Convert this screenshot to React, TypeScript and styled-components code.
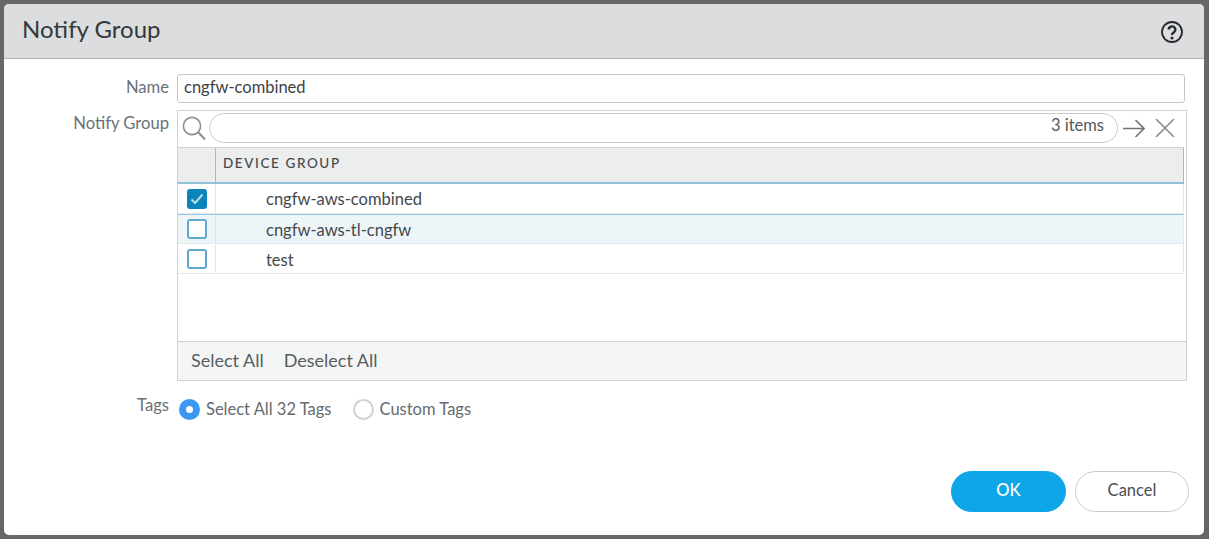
import React from 'react';
import styled, { createGlobalStyle } from 'styled-components';

const GlobalStyle = createGlobalStyle`
  html, body {
    margin: 0;
    padding: 0;
    height: 100%;
    background: #666767;
    font-family: Lato, "Open Sans", sans-serif;
  }
  * {
    box-sizing: border-box;
  }
`;

const Page = styled.div`
  width: 1209px;
  height: 539px;
  padding: 4px 5px 4px 4px;
`;

const Dialog = styled.div`
  height: 531px;
  background: #fff;
  border-radius: 5px;
  overflow: hidden;
  display: flex;
  flex-direction: column;
`;

const Header = styled.header`
  height: 55px;
  flex: none;
  background: #dcdddf;
  border-bottom: 1px solid #b0b2b4;
  display: flex;
  align-items: center;
  justify-content: space-between;
  padding: 0 21px 0 18px;
`;

const Title = styled.h1`
  margin: 0 0 5px;
  font-size: 24px;
  font-weight: 400;
  color: #33383c;
`;

const HelpIcon = styled.svg`
  margin-top: 1px;
`;

const Body = styled.div`
  flex: 1;
  display: flex;
  flex-direction: column;
  padding: 15px 15px 23px 0;
`;

const Row = styled.div<{ $mt?: number }>`
  display: grid;
  grid-template-columns: 165px 1fr;
  column-gap: 8px;
  margin-top: ${(p) => p.$mt ?? 0}px;
`;

const Label = styled.label<{ $offset: number }>`
  text-align: right;
  font-size: 16.6px;
  line-height: 20px;
  color: #6a7278;
  margin-top: ${(p) => p.$offset}px;
`;

const NameInput = styled.div`
  width: 1008px;
  height: 29px;
  border: 1px solid #c4c6c8;
  border-radius: 3px;
  padding: 0 6px;
  font-size: 16.5px;
  line-height: 24px;
  color: #3d4246;
`;

const Group = styled.div`
  width: 1010px;
  height: 271px;
  border: 1px solid #d0d2d3;
  display: flex;
  flex-direction: column;
`;

const Toolbar = styled.div`
  height: 36px;
  flex: none;
  display: flex;
  align-items: center;
  padding: 0 11px 2px 4px;
`;

const SearchPill = styled.div`
  width: 909px;
  height: 30px;
  margin-left: 3px;
  border: 1px solid #c8cacb;
  border-radius: 15px;
  text-align: right;
  padding-right: 13px;
  font-size: 16.5px;
  line-height: 23px;
  color: #55595c;
`;

const ToolIcon = styled.svg<{ $ml: number }>`
  margin-left: ${(p) => p.$ml}px;
  flex: none;
`;

const HeaderRow = styled.div`
  height: 37px;
  flex: none;
  width: 1006px;
  background: #eceeee;
  border-top: 1px solid #d0d2d3;
  border-bottom: 2px solid #8fc3dc;
  border-right: 1px solid #b4b6b7;
  display: flex;
`;

const HeaderCheckCell = styled.div`
  width: 38px;
  flex: none;
  border-right: 1px solid #b4b6b7;
`;

const HeaderCell = styled.div`
  padding-left: 7px;
  font-size: 13.5px;
  font-weight: 500;
  line-height: 31px;
  letter-spacing: 1.6px;
  color: #43494d;
`;

const Rows = styled.div`
  flex: 1;
`;

const TableRow = styled.div<{ $hover?: boolean }>`
  width: 1006px;
  height: 30px;
  display: flex;
  background: ${(p) => (p.$hover ? '#edf5f8' : '#fff')};
  border-bottom: 1px solid #e6e8e9;
  border-top: ${(p) => (p.$hover ? '1px solid #8fc8e2' : 'none')};
  border-right: 1px solid #e6e8e9;

  &:last-child {
    padding-top: 1px;
  }
`;

const CheckCell = styled.div`
  width: 38px;
  flex: none;
  border-right: 1px solid #e3e5e6;
  display: flex;
  align-items: center;
  justify-content: center;
`;

const Check = styled.div<{ $checked?: boolean }>`
  width: 20px;
  height: 20px;
  border-radius: 3px;
  border: 2px solid ${(p) => (p.$checked ? '#0a84bb' : '#5ea9d0')};
  background: ${(p) => (p.$checked ? '#0a84bb' : '#fff')};
  display: flex;
  align-items: center;
  justify-content: center;
`;

const Cell = styled.div`
  padding-left: 50px;
  font-size: 16.5px;
  line-height: 31px;
  color: #43484c;
`;

const GroupFooter = styled.div`
  height: 39px;
  flex: none;
  background: #f4f6f6;
  border-top: 1px solid #d0d2d3;
  display: flex;
  gap: 20px;
  padding-left: 13px;
  font-size: 18px;
  line-height: 37px;
  color: #585d60;
`;

const RadioGroup = styled.div`
  display: flex;
  align-items: center;
  height: 24px;
  padding-left: 2px;
  font-size: 16.5px;
  line-height: 20px;
  color: #666b6f;
`;

const RadioOption = styled.div<{ $ml?: number }>`
  display: flex;
  align-items: center;
  gap: 6px;
  margin-left: ${(p) => p.$ml ?? 0}px;
`;

const Radio = styled.span<{ $on?: boolean }>`
  width: 21px;
  height: 21px;
  border-radius: 50%;
  border: ${(p) => (p.$on ? '7px solid #3a98f2' : '2px solid #cfd1d2')};
  background: #fff;
`;

const Actions = styled.div`
  margin-top: auto;
  display: flex;
  justify-content: flex-end;
  gap: 9px;
`;

const Button = styled.button<{ $primary?: boolean }>`
  width: ${(p) => (p.$primary ? 115 : 114)}px;
  height: 41px;
  border-radius: 21px;
  border: 1px solid ${(p) => (p.$primary ? '#0ea5e9' : '#c9cbcc')};
  background: ${(p) => (p.$primary ? '#0ea5e9' : '#fff')};
  color: ${(p) => (p.$primary ? '#fff' : '#4a4f53')};
  font-family: inherit;
  font-size: 16.5px;
  font-weight: ${(p) => (p.$primary ? 500 : 400)};
  padding: 0 0 4px;
`;

const devices = [
  { name: 'cngfw-aws-combined', checked: true },
  { name: 'cngfw-aws-tl-cngfw', hover: true },
  { name: 'test' },
];

export default function App() {
  return (
    <Page>
      <GlobalStyle />
      <Dialog>
        <Header>
          <Title>Notify Group</Title>
          <HelpIcon width="22" height="22" viewBox="0 0 22 22" fill="none">
            <circle cx="11" cy="11" r="10" stroke="#26292c" strokeWidth="1.8" />
            <path d="M7.6 8.6a3.4 3.2 0 1 1 5.4 2.6c-1.2.8-2 1.3-2 2.7" stroke="#26292c" strokeWidth="2.4" />
            <circle cx="11" cy="17" r="1.5" fill="#26292c" />
          </HelpIcon>
        </Header>
        <Body>
          <Row>
            <Label $offset={3}>Name</Label>
            <NameInput>cngfw-combined</NameInput>
          </Row>
          <Row $mt={7}>
            <Label $offset={3}>Notify Group</Label>
            <Group>
              <Toolbar>
                <svg width="24" height="26" viewBox="0 0 24 26" fill="none">
                  <circle cx="10" cy="11" r="8.6" stroke="#8a8e90" strokeWidth="1.6" />
                  <path d="M16.5 17.5L23 24.5" stroke="#8a8e90" strokeWidth="2" />
                </svg>
                <SearchPill>3 items</SearchPill>
                <ToolIcon $ml={5} width="22" height="18" viewBox="0 0 22 18" fill="none">
                  <path d="M0 9.5H21M12.5 1L21 9.5L12.5 18" stroke="#6f7375" strokeWidth="1.6" />
                </ToolIcon>
                <ToolIcon $ml={10} width="20" height="18" viewBox="0 0 20 18" fill="none">
                  <path d="M1 0L19 18M19 0L1 18" stroke="#84888a" strokeWidth="1.5" />
                </ToolIcon>
              </Toolbar>
              <HeaderRow>
                <HeaderCheckCell />
                <HeaderCell>DEVICE GROUP</HeaderCell>
              </HeaderRow>
              <Rows>
                {devices.map((d) => (
                  <TableRow key={d.name} $hover={d.hover}>
                    <CheckCell>
                      <Check $checked={d.checked}>
                        {d.checked && (
                          <svg width="14" height="12" viewBox="0 0 14 12" fill="none">
                            <path d="M1.5 6.5L5 10L12.5 1.5" stroke="#b9dcee" strokeWidth="2" />
                          </svg>
                        )}
                      </Check>
                    </CheckCell>
                    <Cell>{d.name}</Cell>
                  </TableRow>
                ))}
              </Rows>
              <GroupFooter>
                <span>Select All</span>
                <span>Deselect All</span>
              </GroupFooter>
            </Group>
          </Row>
          <Row $mt={16}>
            <Label $offset={-2}>Tags</Label>
            <RadioGroup>
              <RadioOption>
                <Radio $on />
                Select All 32 Tags
              </RadioOption>
              <RadioOption $ml={21}>
                <Radio />
                Custom Tags
              </RadioOption>
            </RadioGroup>
          </Row>
          <Actions>
            <Button $primary>OK</Button>
            <Button>Cancel</Button>
          </Actions>
        </Body>
      </Dialog>
    </Page>
  );
}
